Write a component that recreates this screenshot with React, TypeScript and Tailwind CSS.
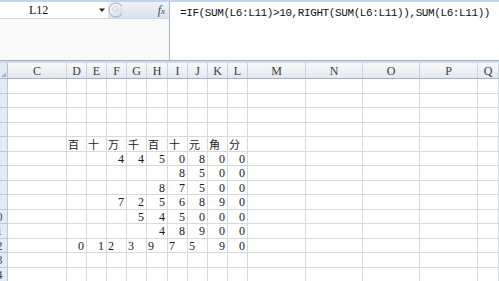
import React from "react";

const COLS = ["C", "D", "E", "F", "G", "H", "I", "J", "K", "L", "M", "N", "O", "P", "Q"];

// D..L, "^" marks left aligned text, plain values are right aligned numbers
const DATA: Record<number, string[]> = {
  5: ["^百", "^十", "^万", "^千", "^百", "^十", "^元", "^角", "^分"],
  6: ["", "", "4", "4", "5", "0", "8", "0", "0"],
  7: ["", "", "", "", "", "8", "5", "0", "0"],
  8: ["", "", "", "", "8", "7", "5", "0", "0"],
  9: ["", "", "7", "2", "5", "6", "8", "9", "0"],
  10: ["", "", "", "5", "4", "5", "0", "0", "0"],
  11: ["", "", "", "", "4", "8", "9", "0", "0"],
  12: ["0", "1", "^2", "^3", "^9", "^7", "^5", "9", "0"],
};

const GRID =
  "grid grid-cols-[8px_59px_20px_20px_20px_20px_21px_20px_20px_20px_20px_58px_57px_57px_58px_21px]";

const MONO = "font-[family-name:'Liberation_Mono',monospace]";
const SERIF = "font-[family-name:'Liberation_Serif',serif]";

function FormulaBar() {
  return (
    <div className="flex h-[60px] border-t-2 border-[#c3d3e8] bg-white">
      <div className="flex w-[170px] flex-col border-r border-[#a9b5c3]">
        <div className="flex h-[17px] items-center border-b border-[#cfd6df]">
          <div className={`w-[98px] pl-[29px] ${SERIF} text-[12px] leading-none text-[#111]`}>L12</div>
          <svg width="8" height="6" viewBox="0 0 8 6" className="mr-[2px]">
            <path d="M1 1.5h6L4 5z" fill="#222" />
          </svg>
          <div className="flex h-full flex-1 items-center justify-between bg-gradient-to-b from-[#eef3f9] to-[#dae3ee] pr-[4px]">
            <svg width="14" height="16" viewBox="0 0 14 16">
              <defs>
                <linearGradient id="btn" x1="0" y1="0" x2="1" y2="1">
                  <stop offset="0" stopColor="#ffffff" />
                  <stop offset="1" stopColor="#cfd6df" />
                </linearGradient>
              </defs>
              <circle cx="8" cy="8" r="7" fill="url(#btn)" stroke="#a3adb9" strokeWidth="1" />
              <circle cx="7" cy="7" r="2.5" fill="#e9edf2" stroke="#c2cad4" strokeWidth="0.6" />
            </svg>
            <span className={`${SERIF} text-[12px] italic leading-none text-[#444]`}>
              f<span className="text-[9px]">x</span>
            </span>
          </div>
        </div>
        <div className="flex-1 bg-[#fafafa]" />
      </div>
      <div
        className={`flex-1 overflow-hidden whitespace-nowrap pl-[10px] pt-[4px] ${MONO} text-[11px] leading-[14px] tracking-[-0.4px] text-[#111]`}
      >
        =IF(SUM(L6:L11)&gt;10,RIGHT(SUM(L6:L11)),SUM(L6:L11))
      </div>
    </div>
  );
}

function HeaderRow() {
  return (
    <div className={`${GRID} h-[16px] border-b border-[#9fb2c6] bg-gradient-to-b from-[#f8fafc] to-[#e3e8ee]`}>
      <div className="flex items-end justify-end border-r border-[#b5c3d2] bg-[#e2e9f2] p-[1px]">
        <svg width="5" height="5" viewBox="0 0 5 5">
          <path d="M5 0v5H0z" fill="#a7b7cb" />
        </svg>
      </div>
      {COLS.map((c) => (
        <div
          key={c}
          className={`flex items-center justify-center border-r border-[#c9d1db] ${SERIF} text-[12px] leading-none text-[#3a3a3a]`}
        >
          {c}
        </div>
      ))}
    </div>
  );
}

function Row({ n }: { n: number }) {
  const vals = DATA[n] ?? [];
  return (
    <div className={`${GRID} ${n % 2 === 1 ? "h-[15px]" : "h-[14px]"}`}>
      {/* the sheet is cropped: only the right edge of the row numbers shows */}
      <div className="flex items-center justify-end overflow-hidden border-r border-b border-[#b9c8da] bg-[#e3ebf6]">
        <div className={`w-[21px] shrink-0 text-center ${SERIF} text-[12px] leading-none text-[#3c4a5c]`}>{n}</div>
      </div>
      {COLS.map((c, i) => {
        const raw = i >= 1 && i <= 9 ? vals[i - 1] ?? "" : "";
        const left = raw.startsWith("^");
        const v = left ? raw.slice(1) : raw;
        const cjk = /[^\x00-\x7f]/.test(v);
        return (
          <div
            key={c}
            className={`flex items-center overflow-hidden whitespace-nowrap border-r border-b border-[#d6dade] leading-none text-[#1a1a1a] ${
              left ? "justify-start pl-[1px]" : "justify-end pr-[2px]"
            } ${cjk ? "font-[family-name:'Noto_Sans_CJK_SC',sans-serif] text-[11px]" : `${SERIF} text-[12px]`}`}
          >
            {v}
          </div>
        );
      })}
    </div>
  );
}

export default function App() {
  const rows = Array.from({ length: 14 }, (_, i) => i + 1);
  return (
    <div className="h-[281px] w-[499px] overflow-hidden bg-white">
      <FormulaBar />
      <div className="h-[3px] border-t border-[#9eb0c4] bg-[#d3dde8]" />
      <HeaderRow />
      {rows.map((n) => (
        <Row key={n} n={n} />
      ))}
    </div>
  );
}
